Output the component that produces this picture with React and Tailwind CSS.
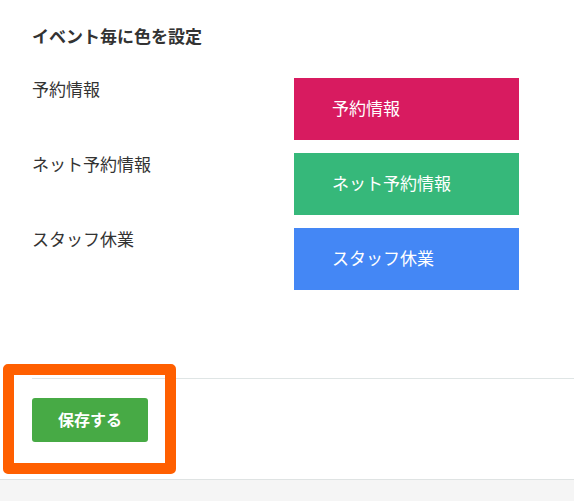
import React from 'react';

const events = [
  { label: '予約情報', color: 'bg-[#d81b60]' },
  { label: 'ネット予約情報', color: 'bg-[#36b87a]' },
  { label: 'スタッフ休業', color: 'bg-[#4487f5]' },
];

const App = () => {
  return (
    <div
      className="relative w-[574px] h-[501px] bg-white flex flex-col text-[#333]"
      style={{ fontFamily: '"Noto Sans CJK JP", "Noto Sans", sans-serif' }}
    >
      <div className="flex-1 flex flex-col">
        <div className="pl-8 pt-[25px]">
          <h2 className="text-[17px] font-bold leading-[22px] text-[#333]">イベント毎に色を設定</h2>

          <div className="mt-[31px] flex flex-col gap-[13px]">
            {events.map((ev) => (
              <div key={ev.label} className="flex items-start">
                <div className="w-[262px] text-[17px] leading-[22px]">{ev.label}</div>
                <div className={`${ev.color} w-[225px] h-[62px] flex items-center pl-[38px] pb-[3px] text-white text-[17px]`}>
                  {ev.label}
                </div>
              </div>
            ))}
          </div>
        </div>

        <div className="mt-[88px] ml-8 border-t border-[#dfe5e5]" />

        <div className="pl-8 pt-[19px]">
          <button className="w-[116px] h-[44px] pb-[3px] rounded-[3px] bg-[#47aa45] text-white text-[16px] font-bold">
            保存する
          </button>
        </div>
      </div>

      <div className="h-[22px] border-t border-[#dfe3e3] bg-[#f5f5f5]" />

      {/* annotation highlight */}
      <div className="absolute left-[3px] top-[364px] w-[173px] h-[110px] border-[11px] border-[#ff5f00] rounded-[5px]" />
    </div>
  );
};

export default App;
